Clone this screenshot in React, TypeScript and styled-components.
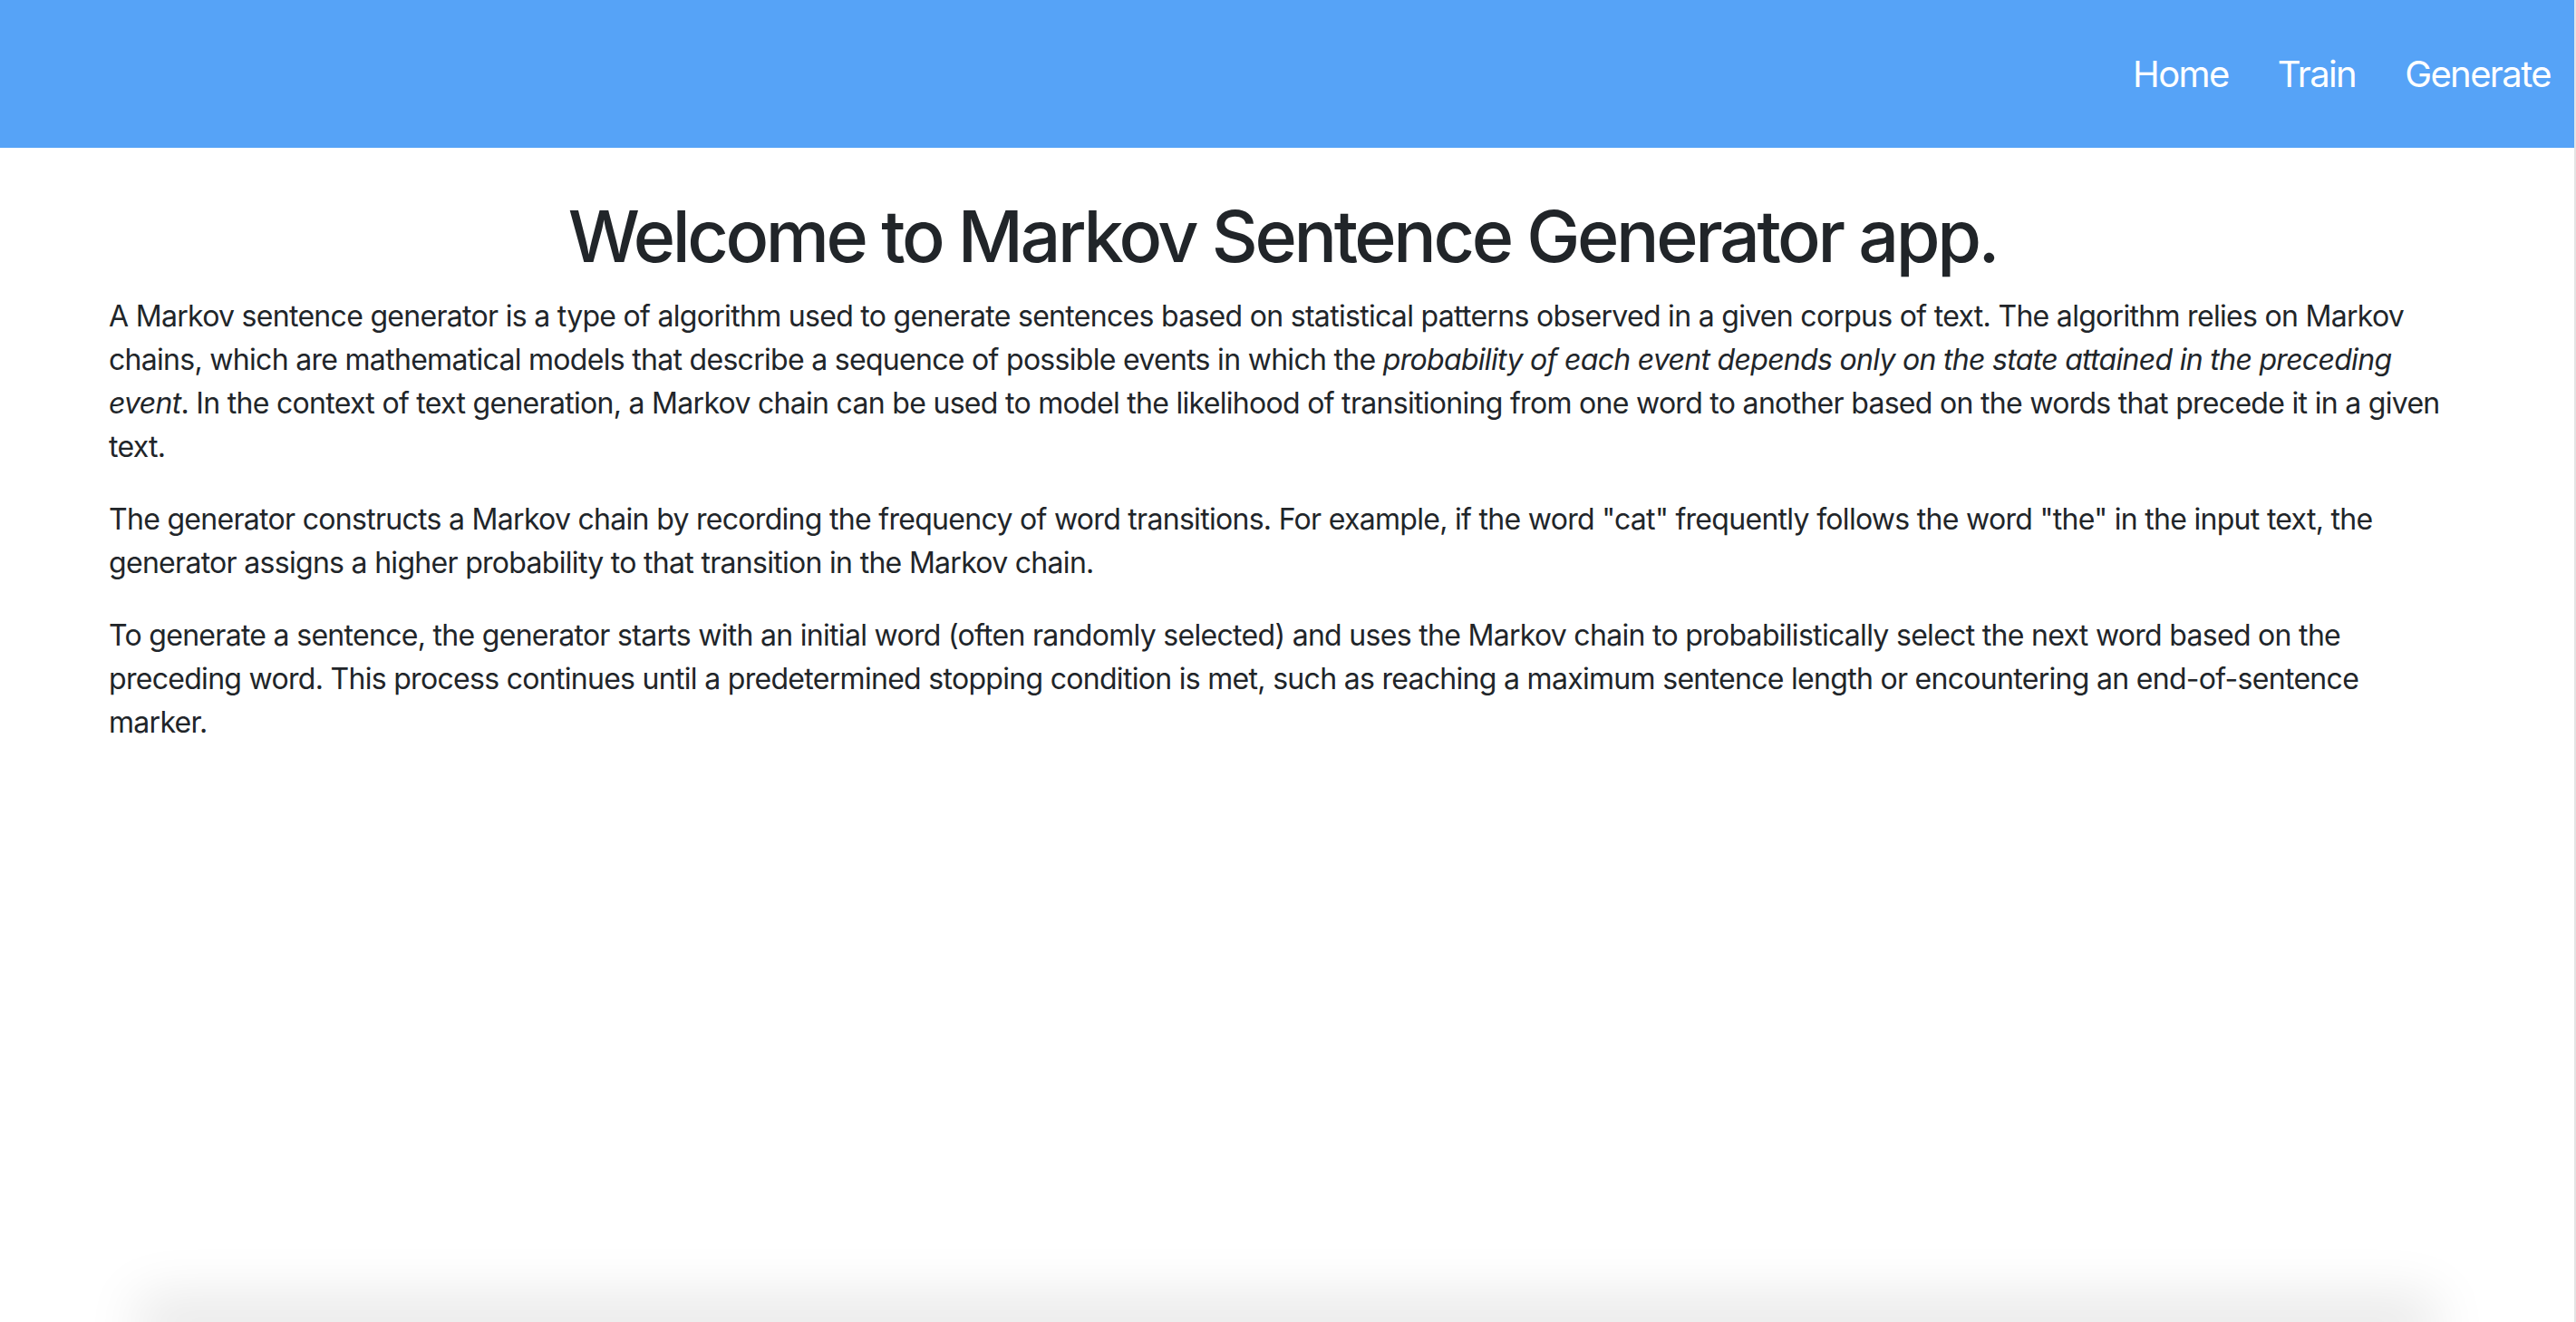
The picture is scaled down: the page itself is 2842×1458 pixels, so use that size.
import React from "react";
import styled, { createGlobalStyle } from "styled-components";

const GlobalStyle = createGlobalStyle`
  html, body {
    margin: 0;
    padding: 0;
    background: #ffffff;
  }
  body {
    font-family: Inter, "Noto Sans", "Liberation Sans", sans-serif;
    color: #212529;
    overflow: hidden;
  }
  * { box-sizing: border-box; }
`;

const Page = styled.div`
  min-height: 100vh;
  display: flex;
  flex-direction: column;
  border-right: 2px solid #e4e4e4;
`;

const NavBar = styled.nav`
  height: 163px;
  background: #56a3f7;
  display: flex;
  align-items: center;
  justify-content: flex-end;
  padding: 0 26px 0 0;
`;

const NavList = styled.ul`
  list-style: none;
  margin: 0;
  padding: 0;
  display: flex;
  align-items: center;
  gap: 54px;
`;

const NavLink = styled.a`
  color: #ffffff;
  text-decoration: none;
  font-size: 40px;
  font-weight: 400;
  letter-spacing: -1.6px;
  line-height: 1.5;
`;

const Main = styled.main`
  flex: 1;
  padding: 50px 130px 0 120px;
`;

const Title = styled.h1`
  margin: 0 0 17px;
  text-align: center;
  font-size: 79px;
  font-weight: 500;
  line-height: 1.2;
  letter-spacing: -3.4px;
  color: #212529;
`;

const Paragraph = styled.p`
  margin: 0 0 32px;
  font-size: 32px;
  line-height: 1.5;
  letter-spacing: -0.7px;
  color: #212529;
`;

const Footer = styled.div`
  height: 0;
  margin: 0 180px;
  box-shadow: 0 0 60px 28px rgba(0, 0, 0, 0.1);
`;

export default function App() {
  return (
    <>
      <GlobalStyle />
      <Page>
        <NavBar>
          <NavList>
            <li><NavLink href="#">Home</NavLink></li>
            <li><NavLink href="#">Train</NavLink></li>
            <li><NavLink href="#">Generate</NavLink></li>
          </NavList>
        </NavBar>
        <Main>
          <Title>Welcome to Markov Sentence Generator app.</Title>
          <Paragraph>
            A Markov sentence generator is a type of algorithm used to generate sentences based on
            statistical patterns observed in a given corpus of text. The algorithm relies on Markov
            chains, which are mathematical models that describe a sequence of possible events in
            which the{" "}
            <em>probability of each event depends only on the state attained in the preceding event</em>.
            In the context of text generation, a Markov chain can be used to model the likelihood of
            transitioning from one word to another based on the words that precede it in a given text.
          </Paragraph>
          <Paragraph>
            The generator constructs a Markov chain by recording the frequency of word transitions.
            For example, if the word "cat" frequently follows the word "the" in the input text, the
            generator assigns a higher probability to that transition in the Markov chain.
          </Paragraph>
          <Paragraph>
            To generate a sentence, the generator starts with an initial word (often randomly
            selected) and uses the Markov chain to probabilistically select the next word based on
            the preceding word. This process continues until a predetermined stopping condition is
            met, such as reaching a maximum sentence length or encountering an end-of-sentence
            marker.
          </Paragraph>
        </Main>
        <Footer />
      </Page>
    </>
  );
}
